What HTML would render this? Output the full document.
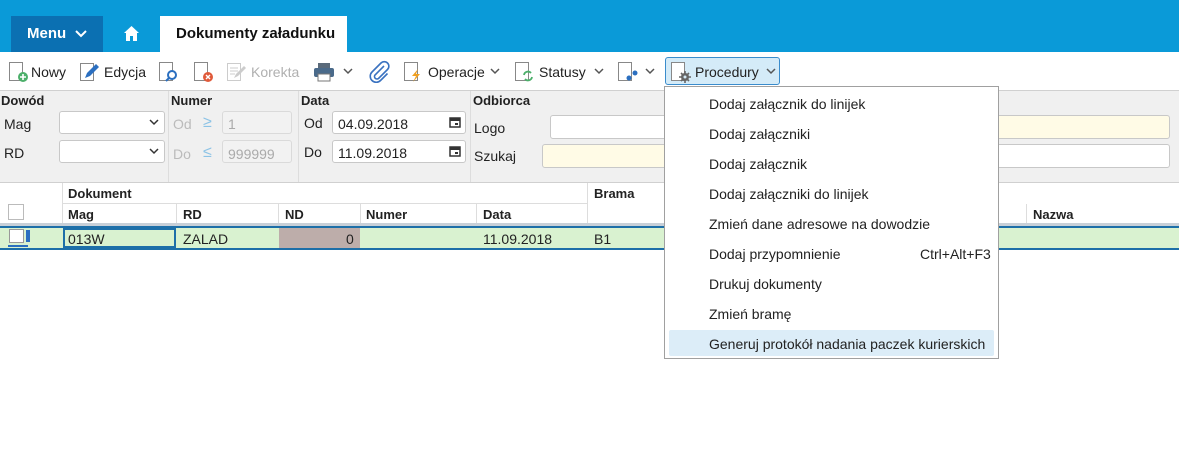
<!DOCTYPE html>
<html><head><meta charset="utf-8"><style>
*{box-sizing:border-box;margin:0;padding:0}
body{width:1179px;height:464px;position:relative;background:#fff;font-family:"Liberation Sans",sans-serif;font-size:14px;color:#222;overflow:hidden}
.a{position:absolute;white-space:nowrap}
.b{font-weight:bold}
.inp{position:absolute;background:#fff;border:1px solid #c8c8c8;border-radius:3px;height:23px}
.dis{background:#f2f2f2;border-color:#dadada;color:#aaa}
.mi{position:absolute;left:45px;font-size:14px;color:#222}
svg{position:absolute}
.chev{font-size:10px;color:#555}
</style></head><body>
<!-- top bar -->
<div class="a" style="left:0;top:0;width:1179px;height:52px;background:#0a9ad8"></div>
<div class="a" style="left:11px;top:16px;width:92px;height:36px;background:#0b70b2"></div>
<div class="a b" style="left:27px;top:25px;color:#fff;font-size:15px">Menu</div>
<svg style="left:75px;top:30px" width="12" height="8"><path d="M1 1l5 5 5-5" stroke="#fff" stroke-width="2" fill="none"/></svg>
<svg style="left:123px;top:25px" width="17" height="17"><path d="M8.5 1L1 8h2v8h4v-5h3v5h4V8h2z" fill="#fff"/></svg>
<div class="a" style="left:160px;top:16px;width:187px;height:36px;background:#fff"></div>
<div class="a b" style="left:176px;top:25px;font-size:15px;color:#111">Dokumenty załadunku</div>

<!-- toolbar -->
<svg style="left:8px;top:61px" width="22" height="22"><rect x="1.5" y="1.5" width="13" height="18" fill="#fff" stroke="#888"/><circle cx="15" cy="16" r="5" fill="#4caf6a"/><path d="M15 13v6M12 16h6" stroke="#fff" stroke-width="1.6"/></svg>
<div class="a" style="left:31px;top:64px">Nowy</div>
<svg style="left:79px;top:61px" width="22" height="22"><rect x="1.5" y="2.5" width="13" height="17" fill="#fff" stroke="#888"/><path d="M6 17l2-5 9-9 3 3-9 9z" fill="#2b6fc0"/></svg>
<div class="a" style="left:104px;top:64px">Edycja</div>
<svg style="left:158px;top:61px" width="22" height="22"><rect x="1.5" y="1.5" width="13" height="18" fill="#fff" stroke="#888"/><circle cx="14" cy="14" r="4" fill="#fff" stroke="#2b6fc0" stroke-width="2"/><path d="M11 17l-3 3" stroke="#2b6fc0" stroke-width="2"/></svg>
<svg style="left:193px;top:61px" width="22" height="22"><rect x="1.5" y="1.5" width="13" height="18" fill="#fff" stroke="#888"/><circle cx="15" cy="16" r="5" fill="#e05a3a"/><path d="M13 14l4 4M17 14l-4 4" stroke="#fff" stroke-width="1.4"/></svg>
<svg style="left:226px;top:61px" width="22" height="22"><rect x="1.5" y="2.5" width="13" height="17" fill="#fff" stroke="#ccc"/><path d="M4 7h8M4 10h8M4 13h5" stroke="#ccc"/><path d="M8 17l2-4 8-8 2 2-8 8z" fill="#ccc"/></svg>
<div class="a" style="left:251px;top:64px;color:#b0b0b0">Korekta</div>
<svg style="left:313px;top:61px" width="22" height="22"><rect x="5" y="2" width="12" height="6" fill="#5a6a7a"/><rect x="1" y="7" width="20" height="9" rx="2" fill="#4a6a8a"/><rect x="5" y="13" width="12" height="7" fill="#fff" stroke="#777"/></svg>
<svg style="left:343px;top:68px" width="10" height="7"><path d="M1 1l4 4 4-4" stroke="#555" stroke-width="1.5" fill="none"/></svg>
<svg style="left:367px;top:60px" width="24" height="24"><path d="M17 6l-9 9a2.5 2.5 0 0 0 3.5 3.5l9-9a4.5 4.5 0 0 0-6.5-6.5l-9 9a6 6 0 0 0 8.5 8.5l7-7" stroke="#3a72c0" stroke-width="1.6" fill="none"/></svg>
<svg style="left:403px;top:61px" width="22" height="22"><rect x="1.5" y="1.5" width="13" height="18" fill="#fff" stroke="#888"/><path d="M15 8l-6 7h4l-3 6 7-8h-4z" fill="#f0a020"/></svg>
<div class="a" style="left:428px;top:64px">Operacje</div>
<svg style="left:490px;top:68px" width="10" height="7"><path d="M1 1l4 4 4-4" stroke="#555" stroke-width="1.5" fill="none"/></svg>
<svg style="left:514px;top:61px" width="22" height="22"><rect x="1.5" y="1.5" width="13" height="18" fill="#fff" stroke="#888"/><path d="M10 14a4 4 0 0 1 7-2M18 16a4 4 0 0 1-7 2" stroke="#4caf6a" stroke-width="1.8" fill="none"/></svg>
<div class="a" style="left:539px;top:64px">Statusy</div>
<svg style="left:594px;top:68px" width="10" height="7"><path d="M1 1l4 4 4-4" stroke="#555" stroke-width="1.5" fill="none"/></svg>
<svg style="left:617px;top:61px" width="22" height="22"><rect x="1.5" y="1.5" width="13" height="18" fill="#fff" stroke="#888"/><circle cx="12" cy="17" r="2.5" fill="#2b6fc0"/><circle cx="18" cy="12" r="2.5" fill="#2b6fc0"/></svg>
<svg style="left:645px;top:68px" width="10" height="7"><path d="M1 1l4 4 4-4" stroke="#555" stroke-width="1.5" fill="none"/></svg>
<div class="a" style="left:665px;top:57px;width:115px;height:28px;background:#d4ebf8;border:1px solid #3a8ccc;border-radius:3px"></div>
<svg style="left:670px;top:61px" width="22" height="22"><rect x="1.5" y="1.5" width="13" height="18" fill="#fff" stroke="#888"/><circle cx="15" cy="16" r="4" fill="#666"/><circle cx="15" cy="16" r="1.5" fill="#d4ebf8"/><path d="M15 10v12M9 16h12M11 12l8 8M19 12l-8 8" stroke="#666" stroke-width="1.6"/><circle cx="15" cy="16" r="1.5" fill="#d4ebf8"/></svg>
<div class="a" style="left:695px;top:64px">Procedury</div>
<svg style="left:766px;top:68px" width="10" height="7"><path d="M1 1l4 4 4-4" stroke="#555" stroke-width="1.5" fill="none"/></svg>

<!-- filter area -->
<div class="a" style="left:0;top:90px;width:1179px;height:93px;background:#f0f0f0;border-top:1px solid #d0d0d0;border-bottom:1px solid #d0d0d0"></div>
<div class="a" style="left:168px;top:91px;width:1px;height:91px;background:#ddd"></div>
<div class="a" style="left:298px;top:91px;width:1px;height:91px;background:#ddd"></div>
<div class="a" style="left:470px;top:91px;width:1px;height:91px;background:#ddd"></div>
<div class="a b" style="left:1px;top:93px;font-size:13px">Dowód</div>
<div class="a" style="left:4px;top:116px">Mag</div>
<div class="a" style="left:4px;top:145px">RD</div>
<div class="inp" style="left:59px;top:111px;width:106px"></div>
<div class="inp" style="left:59px;top:140px;width:106px"></div>
<svg style="left:149px;top:119px" width="10" height="7"><path d="M1 1l4 4 4-4" stroke="#333" stroke-width="1.5" fill="none"/></svg>
<svg style="left:149px;top:148px" width="10" height="7"><path d="M1 1l4 4 4-4" stroke="#333" stroke-width="1.5" fill="none"/></svg>
<div class="a b" style="left:171px;top:93px;font-size:13px">Numer</div>
<div class="a" style="left:173px;top:116px;color:#bbb">Od</div>
<div class="a" style="left:173px;top:146px;color:#bbb">Do</div>
<div class="a" style="left:203px;top:114px;color:#8cc3e6;font-size:16px">≥</div>
<div class="a" style="left:203px;top:144px;color:#8cc3e6;font-size:16px">≤</div>
<div class="inp dis" style="left:222px;top:111px;width:70px"></div>
<div class="inp dis" style="left:222px;top:140px;width:70px"></div>
<div class="a" style="left:228px;top:116px;color:#aaa">1</div>
<div class="a" style="left:228px;top:146px;color:#aaa">999999</div>
<div class="a b" style="left:301px;top:93px;font-size:13px">Data</div>
<div class="a" style="left:304px;top:115px">Od</div>
<div class="a" style="left:304px;top:144px">Do</div>
<div class="inp" style="left:332px;top:111px;width:134px"></div>
<div class="inp" style="left:332px;top:140px;width:134px"></div>
<div class="a" style="left:338px;top:116px">04.09.2018</div>
<div class="a" style="left:338px;top:145px">11.09.2018</div>
<svg style="left:449px;top:116px" width="12" height="12"><rect x="1" y="2" width="10" height="9" fill="none" stroke="#333" stroke-width="1.5"/><rect x="1" y="2" width="10" height="3" fill="#333"/><rect x="6" y="7" width="3" height="2" fill="#333"/></svg>
<svg style="left:449px;top:145px" width="12" height="12"><rect x="1" y="2" width="10" height="9" fill="none" stroke="#333" stroke-width="1.5"/><rect x="1" y="2" width="10" height="3" fill="#333"/><rect x="6" y="7" width="3" height="2" fill="#333"/></svg>
<div class="a b" style="left:473px;top:93px;font-size:13px">Odbiorca</div>
<div class="a" style="left:474px;top:120px">Logo</div>
<div class="a" style="left:474px;top:148px">Szukaj</div>
<div class="inp" style="left:550px;top:115px;width:130px;height:24px"></div>
<div class="inp" style="left:542px;top:144px;width:140px;height:24px;background:#fffbe6"></div>
<div class="inp" style="left:990px;top:115px;width:180px;height:24px;background:#fffbe6"></div>
<div class="inp" style="left:990px;top:144px;width:180px;height:24px"></div>

<!-- grid header -->
<div class="a" style="left:62px;top:183px;width:1px;height:40px;background:#ddd"></div>
<div class="a" style="left:62px;top:203px;width:525px;height:1px;background:#ddd"></div>
<div class="a" style="left:587px;top:183px;width:1px;height:40px;background:#ddd"></div>
<div class="a" style="left:176px;top:204px;width:1px;height:19px;background:#ddd"></div>
<div class="a" style="left:278px;top:204px;width:1px;height:19px;background:#ddd"></div>
<div class="a" style="left:360px;top:204px;width:1px;height:19px;background:#ddd"></div>
<div class="a" style="left:476px;top:204px;width:1px;height:19px;background:#ddd"></div>
<div class="a" style="left:1026px;top:204px;width:1px;height:19px;background:#ddd"></div>
<div class="a" style="left:8px;top:204px;width:16px;height:16px;border:1px solid #bbb;background:#fff"></div>
<div class="a b" style="left:68px;top:186px;font-size:13px">Dokument</div>
<div class="a b" style="left:594px;top:186px;font-size:13px">Brama</div>
<div class="a b" style="left:68px;top:207px;font-size:13px">Mag</div>
<div class="a b" style="left:183px;top:207px;font-size:13px">RD</div>
<div class="a b" style="left:285px;top:207px;font-size:13px">ND</div>
<div class="a b" style="left:366px;top:207px;font-size:13px">Numer</div>
<div class="a b" style="left:483px;top:207px;font-size:13px">Data</div>
<div class="a b" style="left:1033px;top:207px;font-size:13px">Nazwa</div>
<div class="a" style="left:0;top:223px;width:1179px;height:3px;background:#c8d0d8"></div>
<!-- row -->
<div class="a" style="left:0;top:226px;width:1179px;height:24px;background:#d9f2d0;border-top:2px solid #1d6fa8;border-bottom:2px solid #1d6fa8"></div>
<div class="a" style="left:9px;top:229px;width:15px;height:14px;border:1px solid #999;background:#fff"></div>
<div class="a" style="left:26px;top:230px;width:4px;height:12px;background:#2b6fc0"></div>
<div class="a" style="left:8px;top:245px;width:20px;height:2px;background:#2b6fc0"></div>
<div class="a" style="left:63px;top:228px;width:113px;height:20px;border:2px solid #1d6fa8"></div>
<div class="a" style="left:279px;top:228px;width:81px;height:20px;background:#bdadaa"></div>
<div class="a" style="left:68px;top:231px">013W</div>
<div class="a" style="left:183px;top:231px">ZALAD</div>
<div class="a" style="left:346px;top:231px">0</div>
<div class="a" style="left:483px;top:231px">11.09.2018</div>
<div class="a" style="left:594px;top:231px">B1</div>

<!-- dropdown -->
<div class="a" style="left:664px;top:86px;width:335px;height:273px;background:#fff;border:1px solid #a0a0a0"></div>
<div class="a" style="left:669px;top:330px;width:325px;height:26px;background:#dcedf8;border-radius:2px"></div>
<div class="a" style="left:709px;top:96px">Dodaj załącznik do linijek</div>
<div class="a" style="left:709px;top:126px">Dodaj załączniki</div>
<div class="a" style="left:709px;top:156px">Dodaj załącznik</div>
<div class="a" style="left:709px;top:186px">Dodaj załączniki do linijek</div>
<div class="a" style="left:709px;top:216px">Zmień dane adresowe na dowodzie</div>
<div class="a" style="left:709px;top:246px">Dodaj przypomnienie</div>
<div class="a" style="left:920px;top:246px">Ctrl+Alt+F3</div>
<div class="a" style="left:709px;top:276px">Drukuj dokumenty</div>
<div class="a" style="left:709px;top:306px">Zmień bramę</div>
<div class="a" style="left:709px;top:336px">Generuj protokół nadania paczek kurierskich</div>
</body></html>
